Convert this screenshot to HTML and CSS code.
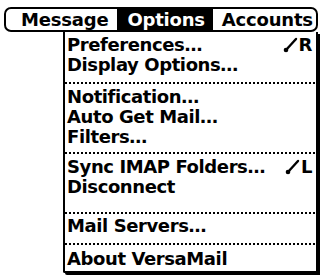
FILE: index.html
```html
<!DOCTYPE html>
<html>
<head>
<meta charset="utf-8">
<link rel="stylesheet" href="styles.css">
</head>
<body>
<div class="screen">
  <div class="menubar">
    <span class="title">Message</span>
    <span class="title active">Options</span>
    <span class="title">Accounts</span>
  </div>
  <div class="dropdown">
    <div class="item"><span>Preferences…</span><span class="shortcut"><svg class="stroke" viewBox="0 0 15 16" width="15" height="16"><line x1="3" y1="13" x2="13" y2="2" stroke="#000" stroke-width="2.4" stroke-linecap="round"/><circle cx="3" cy="13" r="2.3" fill="#000"/></svg>R</span></div>
    <div class="item"><span>Display Options…</span></div>
    <div class="sep sep-1"></div>
    <div class="item"><span>Notification…</span></div>
    <div class="item"><span>Auto Get Mail…</span></div>
    <div class="item"><span>Filters…</span></div>
    <div class="sep sep-2"></div>
    <div class="item"><span>Sync IMAP Folders…</span><span class="shortcut"><svg class="stroke" viewBox="0 0 15 16" width="15" height="16"><line x1="3" y1="13" x2="13" y2="2" stroke="#000" stroke-width="2.4" stroke-linecap="round"/><circle cx="3" cy="13" r="2.3" fill="#000"/></svg>L</span></div>
    <div class="item"><span>Disconnect</span></div>
    <div class="sep sep-3"></div>
    <div class="item"><span>Mail Servers…</span></div>
    <div class="sep sep-4"></div>
    <div class="item"><span>About VersaMail</span></div>
  </div>
</div>
</body>
</html>
```
FILE: styles.css
```css
html, body {
  margin: 0;
  padding: 0;
  background: #fff;
}

.screen {
  width: 323px;
  height: 276px;
  overflow: hidden;
  box-sizing: border-box;
  padding: 7px 0 0 4px;
  font-family: "DejaVu Sans", sans-serif;
  font-weight: bold;
  font-size: 18px;
  color: #000;
}

.menubar {
  box-sizing: border-box;
  width: 314px;
  height: 25px;
  border: 2px solid #000;
  border-radius: 7px;
  display: flex;
  padding-left: 6px;
}

.title {
  line-height: 21px;
  padding: 0 9px;
  letter-spacing: -0.2px;
}

.title.active {
  background: #000;
  color: #fff;
  padding: 0 8px 0 10px;
}

.dropdown {
  box-sizing: border-box;
  margin-left: 59px;
  width: 255px;
  border: 2px solid #000;
  border-top: none;
  border-bottom-left-radius: 2px;
  box-shadow: 2px 2px 0 #000;
  padding: 3px 0 2px 0;
}

.item {
  height: 20px;
  line-height: 20px;
  padding: 0 4px 0 2px;
  display: flex;
  justify-content: space-between;
  letter-spacing: -0.4px;
  white-space: nowrap;
}

.shortcut {
  display: flex;
  align-items: center;
  gap: 1px;
}

.stroke {
  display: block;
}

.sep {
  background-image: linear-gradient(to right, #000 50%, transparent 50%);
  background-size: 4px 2px;
  background-repeat: repeat-x;
}

.sep-1 {
  height: 12px;
  background-position: 0 7px;
}

.sep-2 {
  height: 10px;
  background-position: 0 5px;
}

.sep-3 {
  height: 19px;
  background-position: 0 15px;
}

.sep-4 {
  height: 13px;
  background-position: 0 7px;
}
```
